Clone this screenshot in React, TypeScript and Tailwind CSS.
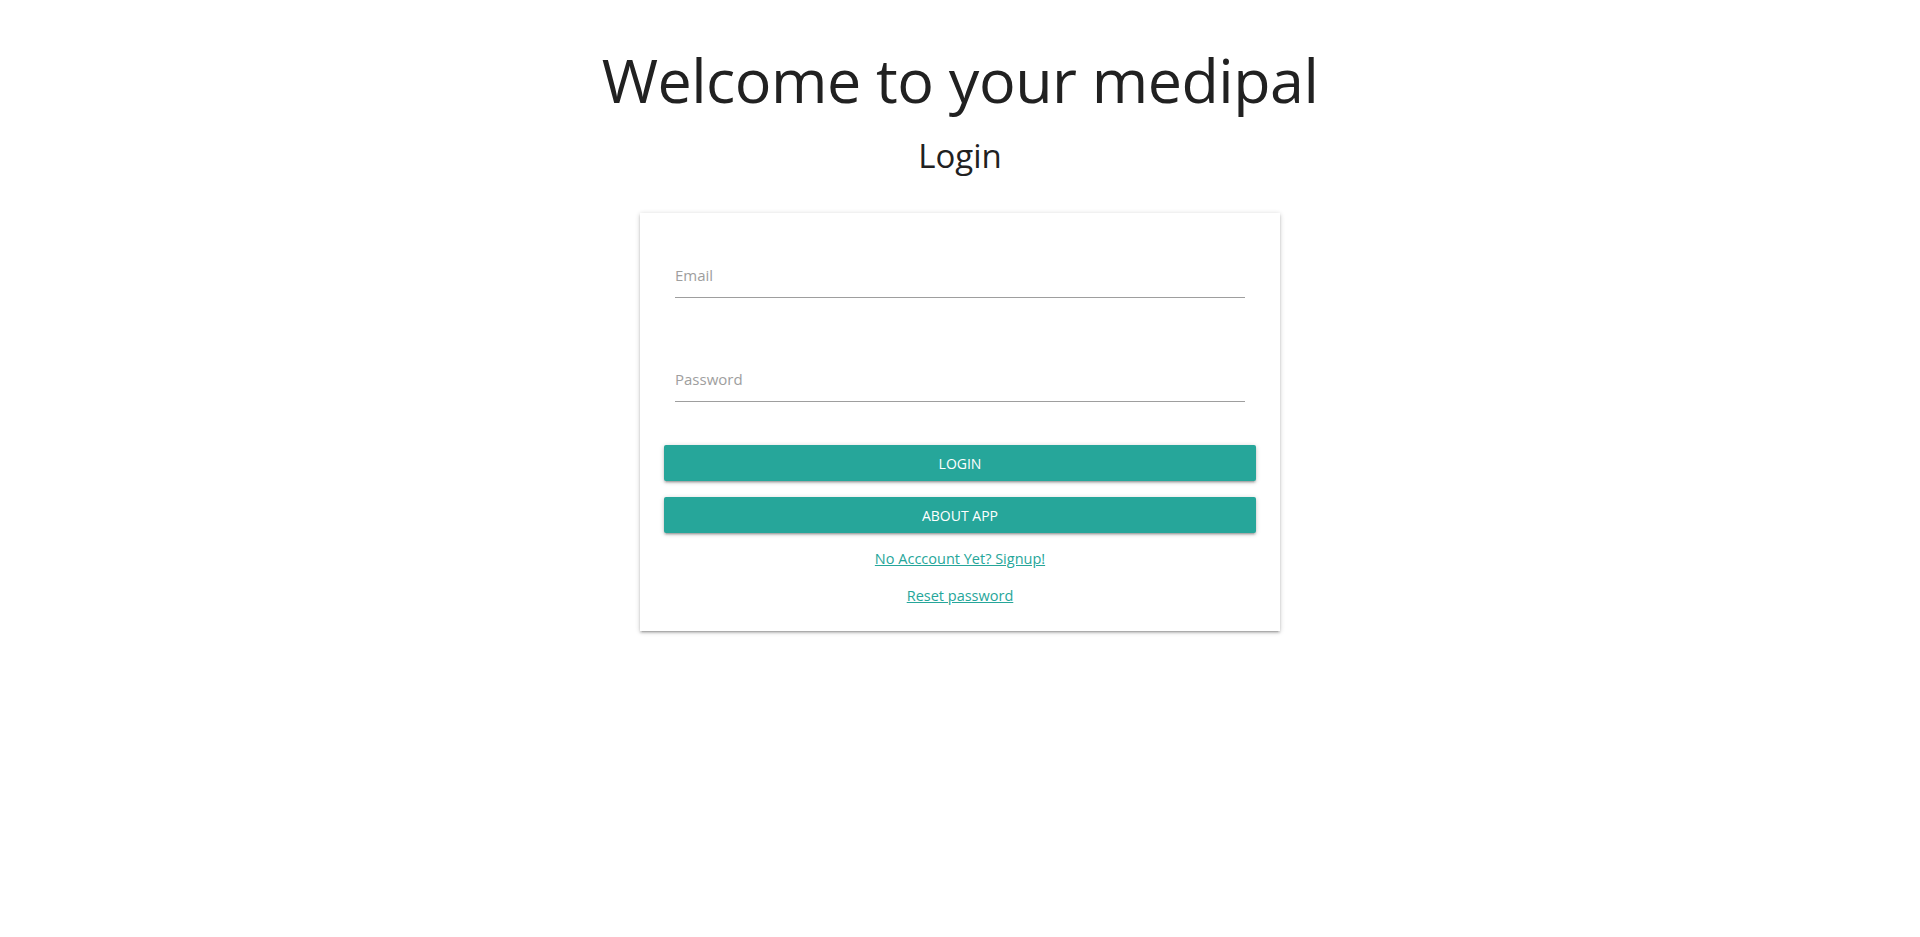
import React, { useState } from 'react';

const LoginPage: React.FC = () => {
  const [email, setEmail] = useState('');
  const [password, setPassword] = useState('');

  return (
    <div className="min-h-screen bg-white font-['Open_Sans',sans-serif] text-[#212121]">
      <div className="flex flex-col items-center">
        {/* Heading */}
        <h1 className="mt-[38px] text-[61px] font-normal leading-[84px] tracking-[-0.5px]">
          Welcome to your medipal
        </h1>
        <h4 className="mt-[12px] text-[33px] font-normal leading-[44px]">Login</h4>

        {/* Card */}
        <div className="mt-[35px] w-[640px] bg-white px-6 pt-[37px] pb-[23px] shadow-[0_2px_2px_0_rgba(0,0,0,0.14),0_3px_1px_-2px_rgba(0,0,0,0.12),0_1px_5px_0_rgba(0,0,0,0.2)]">
          <div className="px-[11px]">
            <input
              type="email"
              value={email}
              onChange={(e) => setEmail(e.target.value)}
              placeholder="Email"
              className="block h-[48px] w-full border-b border-[#9e9e9e] bg-transparent pt-[2px] text-[15px] text-[#212121] outline-none placeholder:text-[#9e9e9e]"
            />
            <input
              type="password"
              value={password}
              onChange={(e) => setPassword(e.target.value)}
              placeholder="Password"
              className="mt-[56px] block h-[48px] w-full border-b border-[#9e9e9e] bg-transparent pt-[2px] text-[15px] text-[#212121] outline-none placeholder:text-[#9e9e9e]"
            />
          </div>

          <button className="mt-[43px] block h-9 w-full rounded-[2px] bg-[#26a69a] text-[14px] uppercase text-white shadow-[0_2px_2px_0_rgba(0,0,0,0.14),0_3px_1px_-2px_rgba(0,0,0,0.12),0_1px_5px_0_rgba(0,0,0,0.2)]">
            Login
          </button>
          <button className="mt-4 block h-9 w-full rounded-[2px] bg-[#26a69a] text-[14px] uppercase text-white shadow-[0_2px_2px_0_rgba(0,0,0,0.14),0_3px_1px_-2px_rgba(0,0,0,0.12),0_1px_5px_0_rgba(0,0,0,0.2)]">
            About App
          </button>

          <div className="mt-[14px] flex flex-col items-center gap-[13px] text-[14.5px] leading-6">
            <a href="#" className="text-[#26a69a] underline">No Acccount Yet? Signup!</a>
            <a href="#" className="text-[#26a69a] underline">Reset password</a>
          </div>
        </div>
      </div>
    </div>
  );
};

export default function App() {
  return <LoginPage />;
}
